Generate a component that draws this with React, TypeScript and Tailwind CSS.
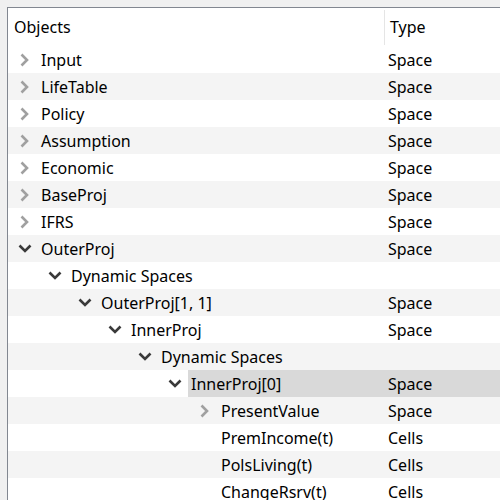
import React from "react";

type Row = {
  name: string;
  type: string;
  level: number;
  toggle?: "open" | "closed";
  selected?: boolean;
};

const rows: Row[] = [
  { name: "Input", type: "Space", level: 0, toggle: "closed" },
  { name: "LifeTable", type: "Space", level: 0, toggle: "closed" },
  { name: "Policy", type: "Space", level: 0, toggle: "closed" },
  { name: "Assumption", type: "Space", level: 0, toggle: "closed" },
  { name: "Economic", type: "Space", level: 0, toggle: "closed" },
  { name: "BaseProj", type: "Space", level: 0, toggle: "closed" },
  { name: "IFRS", type: "Space", level: 0, toggle: "closed" },
  { name: "OuterProj", type: "Space", level: 0, toggle: "open" },
  { name: "Dynamic Spaces", type: "", level: 1, toggle: "open" },
  { name: "OuterProj[1, 1]", type: "Space", level: 2, toggle: "open" },
  { name: "InnerProj", type: "Space", level: 3, toggle: "open" },
  { name: "Dynamic Spaces", type: "", level: 4, toggle: "open" },
  { name: "InnerProj[0]", type: "Space", level: 5, toggle: "open", selected: true },
  { name: "PresentValue", type: "Space", level: 6, toggle: "closed" },
  { name: "PremIncome(t)", type: "Cells", level: 6 },
  { name: "PolsLiving(t)", type: "Cells", level: 6 },
  { name: "ChangeRsrv(t)", type: "Cells", level: 6 },
];

function Chevron({ open }: { open: boolean }) {
  if (open) {
    return (
      <svg width="14" height="9" viewBox="0 0 14 9" className="block">
        <path d="M1.5 1.5 L7 7 L12.5 1.5" fill="none" stroke="#3a3a3a" strokeWidth="2.6" />
      </svg>
    );
  }
  return (
    <svg width="9" height="14" viewBox="0 0 9 14" className="block">
      <path d="M1.5 1.5 L7 7 L1.5 12.5" fill="none" stroke="#a0a0a0" strokeWidth="2.6" />
    </svg>
  );
}

function TreeRow({ row, index }: { row: Row; index: number }) {
  const stripe = index % 2 === 1 ? "bg-[#f4f4f4]" : "bg-white";
  const indent = row.level * 30;
  return (
    <div className={`flex h-[27px] items-center ${stripe}`}>
      <div className="flex h-full w-[376px] shrink-0 items-center" style={{ paddingLeft: indent }}>
        <div className="flex w-[33px] shrink-0 items-center justify-center">
          {row.toggle && <Chevron open={row.toggle === "open"} />}
        </div>
        <div
          className={`flex h-full flex-1 items-center ${row.selected ? "ml-[-3px] bg-[#d9d9d9] pl-[3px]" : ""}`}
        >
          {row.name}
        </div>
      </div>
      <div className={`flex h-full flex-1 items-center pl-[4px] ${row.selected ? "bg-[#d9d9d9]" : ""}`}>
        {row.type}
      </div>
    </div>
  );
}

export default function App() {
  return (
    <div
      className="h-[500px] w-[500px] overflow-hidden bg-[#f0f0f0] pl-[7px] pt-[7px] text-[16px] text-black"
      style={{ fontFamily: '"Noto Sans", "Open Sans", sans-serif' }}
    >
      <div className="h-full border-l border-t border-[#828790] bg-white">
        <div className="flex h-[38px] items-center">
          <div className="w-[376px] shrink-0 pl-[6px]">Objects</div>
          <div className="h-[35px] w-px bg-[#e5e5e5]" />
          <div className="pl-[5px]">Type</div>
        </div>
        {rows.map((r, i) => (
          <TreeRow key={i} row={r} index={i} />
        ))}
      </div>
    </div>
  );
}
